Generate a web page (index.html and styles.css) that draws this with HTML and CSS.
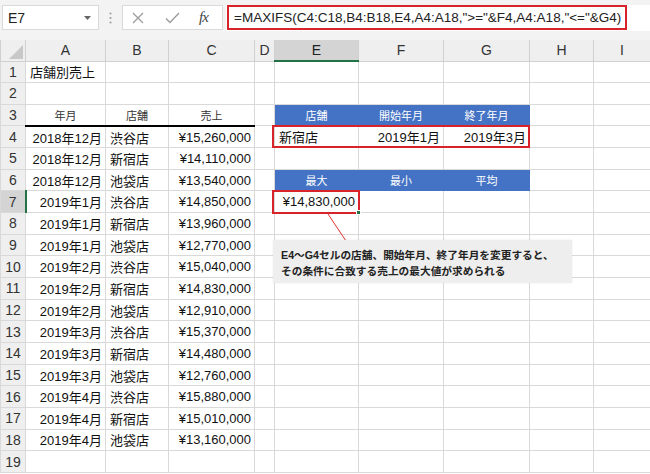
FILE: index.html
```html
<!DOCTYPE html>
<html lang="ja">
<head>
<meta charset="utf-8">
<title>MAXIFS</title>
<link rel="stylesheet" href="styles.css">
</head>
<body>
<div class="app">
  <div class="fbar">
    <div class="namebox">
      <span class="nb-text">E7</span>
      <svg class="nb-arrow" width="7" height="4" viewBox="0 0 7 4"><path d="M0 0H7L3.5 4Z" fill="#666"/></svg>
    </div>
    <div class="grip">
      <svg width="3" height="12" viewBox="0 0 3 12"><circle cx="1.5" cy="1.5" r="1.1" fill="#a0a0a0"/><circle cx="1.5" cy="6" r="1.1" fill="#a0a0a0"/><circle cx="1.5" cy="10.5" r="1.1" fill="#a0a0a0"/></svg>
    </div>
    <div class="fbtns">
      <svg class="ic-x" width="12" height="12" viewBox="0 0 12 12"><path d="M1 1L11 11M11 1L1 11" stroke="#9a9a9a" stroke-width="1.2" fill="none"/></svg>
      <svg class="ic-ok" width="15" height="12" viewBox="0 0 15 12"><path d="M1 6.5L5 10.5L14 1" stroke="#9a9a9a" stroke-width="1.3" fill="none"/></svg>
      <span class="ic-fx">fx</span>
    </div>
    <div class="finput">
      <div class="fbox">=MAXIFS(C4:C18,B4:B18,E4,A4:A18,"&gt;="&amp;F4,A4:A18,"&lt;="&amp;G4)</div>
    </div>
  </div>

  <div class="sheet">
    <table class="grid">
      <colgroup>
        <col class="w-rh"><col class="w-a"><col class="w-b"><col class="w-c"><col class="w-d"><col class="w-e"><col class="w-f"><col class="w-g"><col class="w-h"><col class="w-i">
      </colgroup>
      <tr class="colhead">
        <th class="corner"><span class="tri"></span></th><th>A</th><th>B</th><th>C</th><th>D</th><th class="active-col">E</th><th>F</th><th>G</th><th>H</th><th>I</th>
      </tr>
      <tr><th class="rh">1</th><td class="l">店舗別売上</td><td></td><td></td><td></td><td></td><td></td><td></td><td></td><td></td></tr>
      <tr><th class="rh">2</th><td></td><td></td><td></td><td></td><td></td><td></td><td></td><td></td><td></td></tr>
      <tr><th class="rh">3</th><td class="lbl thick">年月</td><td class="lbl thick">店舗</td><td class="lbl thick">売上</td><td></td><td class="blue">店舗</td><td class="blue">開始年月</td><td class="blue">終了年月</td><td></td><td></td></tr>
      <tr><th class="rh">4</th><td class="r">2018年12月</td><td class="l">渋谷店</td><td class="r">¥15,260,000</td><td></td><td class="l">新宿店</td><td class="r">2019年1月</td><td class="r">2019年3月</td><td></td><td></td></tr>
      <tr><th class="rh">5</th><td class="r">2018年12月</td><td class="l">新宿店</td><td class="r">¥14,110,000</td><td></td><td></td><td></td><td></td><td></td><td></td></tr>
      <tr><th class="rh">6</th><td class="r">2018年12月</td><td class="l">池袋店</td><td class="r">¥13,540,000</td><td></td><td class="blue">最大</td><td class="blue">最小</td><td class="blue">平均</td><td></td><td></td></tr>
      <tr><th class="rh active-row">7</th><td class="r">2019年1月</td><td class="l">渋谷店</td><td class="r">¥14,850,000</td><td></td><td class="r">¥14,830,000</td><td></td><td></td><td></td><td></td></tr>
      <tr><th class="rh">8</th><td class="r">2019年1月</td><td class="l">新宿店</td><td class="r">¥13,960,000</td><td></td><td></td><td></td><td></td><td></td><td></td></tr>
      <tr><th class="rh">9</th><td class="r">2019年1月</td><td class="l">池袋店</td><td class="r">¥12,770,000</td><td></td><td></td><td></td><td></td><td></td><td></td></tr>
      <tr><th class="rh">10</th><td class="r">2019年2月</td><td class="l">渋谷店</td><td class="r">¥15,040,000</td><td></td><td></td><td></td><td></td><td></td><td></td></tr>
      <tr><th class="rh">11</th><td class="r">2019年2月</td><td class="l">新宿店</td><td class="r">¥14,830,000</td><td></td><td></td><td></td><td></td><td></td><td></td></tr>
      <tr><th class="rh">12</th><td class="r">2019年2月</td><td class="l">池袋店</td><td class="r">¥12,910,000</td><td></td><td></td><td></td><td></td><td></td><td></td></tr>
      <tr><th class="rh">13</th><td class="r">2019年3月</td><td class="l">渋谷店</td><td class="r">¥15,370,000</td><td></td><td></td><td></td><td></td><td></td><td></td></tr>
      <tr><th class="rh">14</th><td class="r">2019年3月</td><td class="l">新宿店</td><td class="r">¥14,480,000</td><td></td><td></td><td></td><td></td><td></td><td></td></tr>
      <tr><th class="rh">15</th><td class="r">2019年3月</td><td class="l">池袋店</td><td class="r">¥12,760,000</td><td></td><td></td><td></td><td></td><td></td><td></td></tr>
      <tr><th class="rh">16</th><td class="r">2019年4月</td><td class="l">渋谷店</td><td class="r">¥15,880,000</td><td></td><td></td><td></td><td></td><td></td><td></td></tr>
      <tr><th class="rh">17</th><td class="r">2019年4月</td><td class="l">新宿店</td><td class="r">¥15,010,000</td><td></td><td></td><td></td><td></td><td></td><td></td></tr>
      <tr><th class="rh">18</th><td class="r">2019年4月</td><td class="l">池袋店</td><td class="r">¥13,160,000</td><td></td><td></td><td></td><td></td><td></td><td></td></tr>
      <tr><th class="rh">19</th><td></td><td></td><td></td><td></td><td></td><td></td><td></td><td></td><td></td></tr>
    </table>

    <div class="hl hl-cond"></div>
    <div class="hl hl-result"><span class="handle"></span></div>
    <svg class="pointer" width="24" height="30" viewBox="0 0 24 30"><line x1="3" y1="1" x2="21" y2="28" stroke="#e03030" stroke-width="1"/></svg>
    <div class="callout">E4～G4セルの店舗、開始年月、終了年月を変更すると、<br>その条件に合致する売上の最大値が求められる</div>
  </div>
</div>
</body>
</html>
```

FILE: styles.css
```css
* { box-sizing: border-box; }
html, body { margin: 0; padding: 0; background: #fff; }
body {
  width: 650px;
  height: 474px;
  overflow: hidden;
  font-family: "Liberation Sans", "Noto Sans CJK JP", sans-serif;
  color: #000;
}
.app { width: 650px; height: 474px; display: flex; flex-direction: column; }

/* formula bar */
.fbar {
  height: 40px;
  background: #f3f3f3;
  display: flex;
  align-items: flex-start;
  padding-top: 5px;
  flex-shrink: 0;
}
.namebox {
  width: 97px;
  height: 25px;
  margin-left: 2px;
  background: #fff;
  border: 1px solid #dadada;
  display: flex;
  align-items: center;
  justify-content: space-between;
  padding: 0 7px 0 5px;
  font-size: 14px;
  color: #222;
}
.nb-text { padding-top: 1px; }
.grip { width: 23px; height: 25px; display: flex; align-items: center; justify-content: center; }
.fbtns {
  width: 101px;
  height: 25px;
  background: #fff;
  border: 1px solid #dadada;
  display: flex;
  align-items: center;
  padding-left: 9px;
}
.ic-x { margin-right: 21px; }
.ic-ok { margin-right: 19px; }
.ic-fx {
  font-family: "Liberation Serif", serif;
  font-style: italic;
  font-size: 15px;
  color: #444;
  letter-spacing: -1px;
}
.finput {
  flex: 1;
  height: 26px;
  margin-left: 3px;
  background: #fff;
  display: flex;
}
.fbox {
  width: 400px;
  height: 25px;
  margin-left: 1px;
  border: 2px solid #d8232a;
  font-size: 13.5px;
  line-height: 21px;
  padding-left: 5px;
  color: #222;
  white-space: nowrap;
  overflow: hidden;
}

/* sheet */
.sheet { position: relative; flex: 1; overflow: hidden; }
.grid {
  border-collapse: collapse;
  table-layout: fixed;
  width: 650px;
}
.w-rh { width: 25px; }
.w-a { width: 80px; }
.w-b { width: 63px; }
.w-c { width: 86px; }
.w-d { width: 20px; }
.w-e { width: 84px; }
.w-f { width: 85px; }
.w-g { width: 86px; }
.w-h { width: 64px; }
.w-i { width: 57px; }

.grid tr { height: 21.67px; }
.grid tr.colhead { height: 21px; }
.grid td, .grid th {
  border: 1px solid #d9d9d9;
  padding: 0 3px;
  white-space: nowrap;
  overflow: hidden;
  font-size: 13px;
  font-weight: normal;
  color: #111;
}
.colhead th {
  background: #efefef;
  border-color: #d0d0d0;
  color: #333;
  font-size: 14px;
  text-align: center;
  border-top: none;
}
.colhead th.active-col {
  background: #d4d4d4;
  border-bottom: 2px solid #217346;
  color: #222;
}
.corner { position: relative; border-left: none; }
.tri {
  position: absolute;
  right: 2px;
  bottom: 2px;
  width: 0; height: 0;
  border-left: 14px solid transparent;
  border-bottom: 14px solid #c8c8c8;
}
.rh {
  background: #efefef;
  border-color: #d0d0d0;
  border-left: none;
  color: #333;
  text-align: center;
}
.grid th.rh { font-size: 14px; color: #333; }
.rh.active-row {
  background: #d4d4d4;
  border-right: 2px solid #217346;
}
.grid td.l { text-align: left; padding-left: 4px; }
.grid td.r { text-align: right; padding-right: 3px; }
.grid td.lbl { text-align: center; font-size: 11px; color: #333; }
.grid td.thick { border-bottom: 2px solid #000; }
.grid td.blue {
  background: #4472c4;
  border-color: #4472c4;
  color: #fff;
  text-align: center;
  font-size: 11px;
}
.grid td:last-child { border-right: none; }

/* overlays */
.hl { position: absolute; border: 2px solid #d8232a; }
.hl-cond { left: 272px; top: 85px; width: 258px; height: 23px; }
.hl-result { left: 272px; top: 150px; width: 88px; height: 24px; }
.handle {
  position: absolute;
  right: -3px;
  bottom: -3px;
  width: 5px;
  height: 5px;
  background: #217346;
  border: 1px solid #fff;
}
.pointer { position: absolute; left: 325px; top: 173px; }
.callout {
  position: absolute;
  left: 273px;
  top: 200px;
  width: 299px;
  height: 43px;
  background: #eeeeee;
  box-shadow: 0 0 2px rgba(0,0,0,0.08);
  padding: 7px 0 0 8px;
  font-size: 10.7px;
  line-height: 16px;
  font-weight: bold;
  color: #222;
  white-space: nowrap;
}
```
